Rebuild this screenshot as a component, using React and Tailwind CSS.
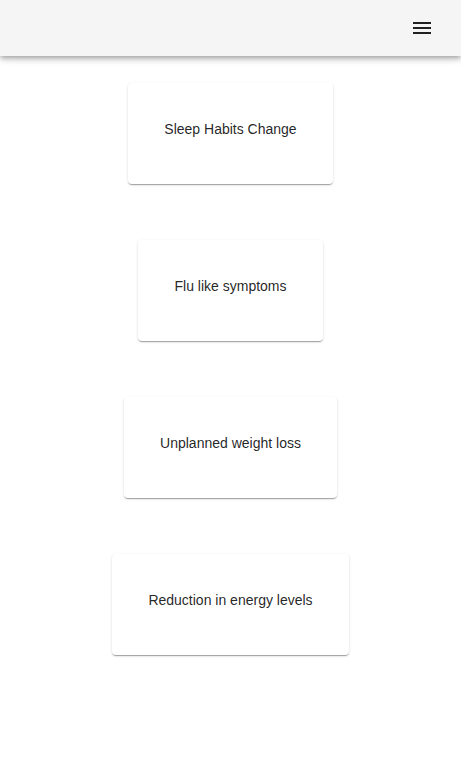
import React from "react";

const symptoms = [
  "Sleep Habits Change",
  "Flu like symptoms",
  "Unplanned weight loss",
  "Reduction in energy levels",
];

export default function App() {
  return (
    <div className="min-h-screen bg-white font-['Liberation_Sans',Arial,sans-serif] text-[rgba(0,0,0,0.87)]">
      {/* App bar */}
      <header className="relative z-10 h-14 bg-[#f5f5f5] flex items-center justify-end pr-[15px] shadow-[0_2px_4px_-1px_rgba(0,0,0,0.2),0_4px_5px_0_rgba(0,0,0,0.14),0_1px_10px_0_rgba(0,0,0,0.12)]">
        <button className="w-12 h-12 flex items-center justify-center">
          <svg width="24" height="24" viewBox="0 0 24 24" fill="#212121">
            <path d="M3 18h18v-2H3v2zm0-5h18v-2H3v2zm0-7v2h18V6H3z" />
          </svg>
        </button>
      </header>

      {/* Cards */}
      <main className="flex flex-col items-center -mt-px">
        {symptoms.map((s) => (
          <div
            key={s}
            className="my-7 bg-white rounded px-9 pt-9 pb-11 text-sm leading-[21px] shadow-[0_2px_1px_-1px_rgba(0,0,0,0.2),0_1px_1px_0_rgba(0,0,0,0.14),0_1px_3px_0_rgba(0,0,0,0.12)]"
          >
            {s}
          </div>
        ))}
      </main>
    </div>
  );
}
